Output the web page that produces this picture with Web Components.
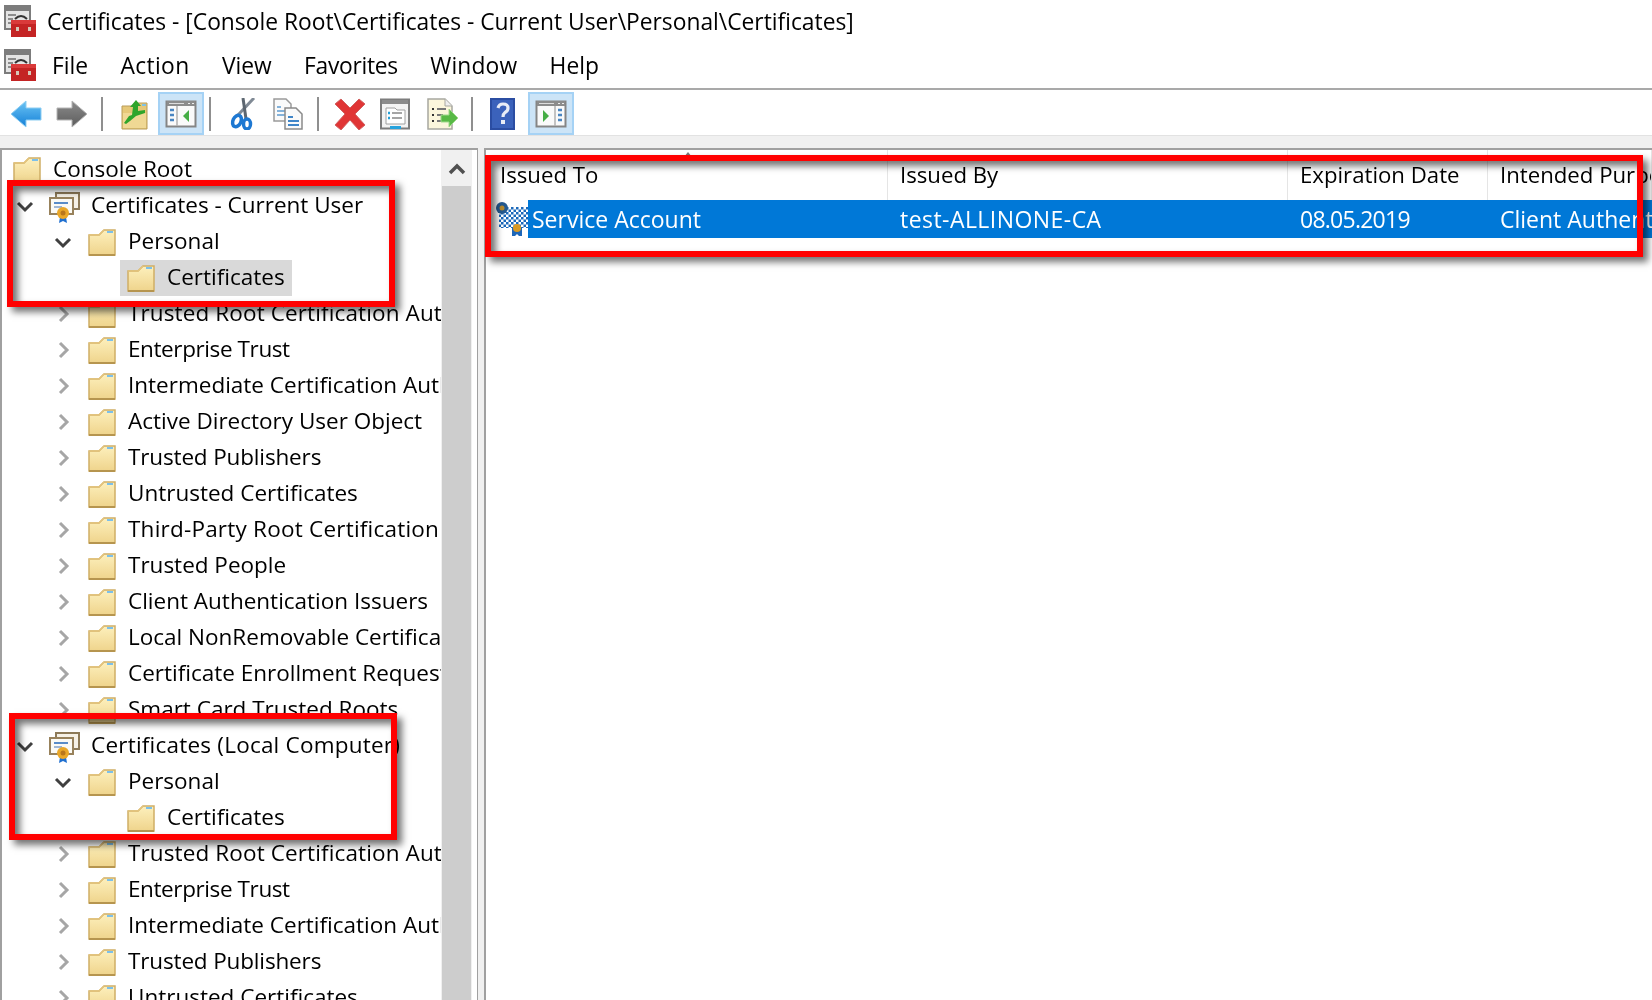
<!DOCTYPE html>
<html lang="en">
<head>
<meta charset="utf-8">
<title>Certificates</title>
<style>
  html, body { margin: 0; height: 100%; overflow: hidden; background: #fff; }
  body { font: 22.8px "Open Sans", "Noto Sans", sans-serif; color: #000; }
  tree-row { font-size: 22.5px; }
  .tight { letter-spacing: -.4px; }
  .snug { letter-spacing: -.15px; }
  .wide { letter-spacing: .12px; }
  .loose { letter-spacing: .22px; }
</style>
</head>
<body>
<mmc-window>
  <title-bar slot="title">Certificates - [Console Root\Certificates - Current User\Personal\Certificates]</title-bar>
  <menu-bar slot="menu"></menu-bar>
  <tool-bar slot="tools"></tool-bar>
  <tree-pane slot="tree">
    <tree-row icon="folder">Console Root</tree-row>
    <tree-row depth="1" exp="open" icon="cert">Certificates - Current User</tree-row>
    <tree-row depth="2" exp="open" icon="folder">Personal</tree-row>
    <tree-row depth="3" icon="folder" selected>Certificates</tree-row>
    <tree-row depth="2" exp="closed" icon="folder" class="wide">Trusted Root Certification Authorities</tree-row>
    <tree-row depth="2" exp="closed" icon="folder" class="tight">Enterprise Trust</tree-row>
    <tree-row depth="2" exp="closed" icon="folder">Intermediate Certification Authorities</tree-row>
    <tree-row depth="2" exp="closed" icon="folder">Active Directory User Object</tree-row>
    <tree-row depth="2" exp="closed" icon="folder" class="snug">Trusted Publishers</tree-row>
    <tree-row depth="2" exp="closed" icon="folder">Untrusted Certificates</tree-row>
    <tree-row depth="2" exp="closed" icon="folder" class="loose">Third-Party Root Certification Authorities</tree-row>
    <tree-row depth="2" exp="closed" icon="folder">Trusted People</tree-row>
    <tree-row depth="2" exp="closed" icon="folder">Client Authentication Issuers</tree-row>
    <tree-row depth="2" exp="closed" icon="folder">Local NonRemovable Certificates</tree-row>
    <tree-row depth="2" exp="closed" icon="folder">Certificate Enrollment Requests</tree-row>
    <tree-row depth="2" exp="closed" icon="folder">Smart Card Trusted Roots</tree-row>
    <tree-row depth="1" exp="open" icon="cert" class="loose">Certificates (Local Computer)</tree-row>
    <tree-row depth="2" exp="open" icon="folder">Personal</tree-row>
    <tree-row depth="3" icon="folder">Certificates</tree-row>
    <tree-row depth="2" exp="closed" icon="folder" class="wide">Trusted Root Certification Authorities</tree-row>
    <tree-row depth="2" exp="closed" icon="folder" class="tight">Enterprise Trust</tree-row>
    <tree-row depth="2" exp="closed" icon="folder">Intermediate Certification Authorities</tree-row>
    <tree-row depth="2" exp="closed" icon="folder" class="snug">Trusted Publishers</tree-row>
    <tree-row depth="2" exp="closed" icon="folder">Untrusted Certificates</tree-row>
  </tree-pane>
  <list-pane slot="list"></list-pane>
  <red-frame slot="marks" style="left:7px;top:180px;width:388px;height:127px"></red-frame>
  <red-frame slot="marks" style="left:9px;top:713px;width:388px;height:127px"></red-frame>
  <red-frame slot="marks" style="left:485px;top:155px;width:1158px;height:102px"></red-frame>
</mmc-window>

<script>
// all icons are drawn on a 32 unit grid unless the svg says otherwise
const consoleIcon = `
  <rect x="1" y="1" width="25" height="23" fill="#e4e4e4" stroke="#7c7c7c" stroke-width="2"/>
  <rect x="2" y="2" width="23" height="4" fill="#7c7c7c"/>
  <path d="M4 10h8M4 14h5M4 18h5" stroke="#8c8c8c" stroke-width="2"/>
  <path d="M11 14q6-6 12 0" fill="none" stroke="#333" stroke-width="2"/>
  <rect x="7" y="15" width="25" height="17" fill="#c42424"/>
  <rect x="7" y="15" width="25" height="4" fill="#da3a3a"/>
  <rect x="12" y="22" width="3" height="4" fill="#d8c8b8"/>
  <rect x="24" y="22" width="3" height="4" fill="#d8c8b8"/>`;

const paneFrame = `
  <rect x="1.500" y="3.500" width="29" height="25" fill="#fafafa" stroke="#858585" stroke-width="2"/>
  <rect x="2" y="3" width="28" height="5" fill="#8c8c8c"/>
  <path d="M4 5.500h15" stroke="#ddd"/>
  <path d="M23 5.500h2M27 5.500h2" stroke="#eee"/>`;

const ICONS = {
  console: consoleIcon,
  back: `<defs><linearGradient id="b" x1="0" y1="0" x2="0" y2="1"><stop offset="0" stop-color="#6cc4f4"/><stop offset="1" stop-color="#1480d8"/></linearGradient></defs>
    <path d="M1 16 16 3v7h15v12H16v7z" fill="url(#b)" stroke="#8ccdf2" stroke-width="1"/>`,
  forward: `<defs><linearGradient id="f" x1="0" y1="0" x2="0" y2="1"><stop offset="0" stop-color="#8c8c8c"/><stop offset="1" stop-color="#5c5c5c"/></linearGradient></defs>
    <path d="M31 16 16 3v7H1v12h15v7z" fill="url(#f)" stroke="#b4b4b4" stroke-width="1"/>`,
  upfolder: `<path d="M4 8h10l3-3h12v26H4z" fill="#e6c878" stroke="#b99c58"/>
    <path d="M5 15h23v15H5z" fill="#f0d894"/>
    <path d="M6 25 11 18l3-1 1-8-3 0 6-7 5 6-3 0 0 5 7-1 0 3-9 3-6 5-4 3z" fill="#2fa52b"/>
    <path d="M24 7h4" stroke="#7fc1e6" stroke-width="2"/>`,
  hidetree: paneFrame + `
    <path d="M12 8v20" stroke="#b0b0b0" stroke-width="1.500"/>
    <path d="M5 12h4M5 17h4M5 22h4" stroke="#4a86c2" stroke-width="2.500"/>
    <path d="M24 12v12l-6-6z" fill="#45ad45"/>`,
  showaction: paneFrame + `
    <path d="M20 8v20" stroke="#b0b0b0" stroke-width="1.500"/>
    <path d="M23 12h4M23 17h4M23 22h4" stroke="#4a86c2" stroke-width="2.500"/>
    <path d="M8 12v12l6-6z" fill="#45ad45"/>`,
  cut: `<path d="M9 17 25 0" stroke="#808a95" stroke-width="3" fill="none"/>
    <path d="M17 21 14 0" stroke="#5c6670" stroke-width="3" fill="none"/>
    <ellipse cx="8" cy="23" rx="4" ry="6" transform="rotate(25 8 23)" fill="none" stroke="#1d78d2" stroke-width="3.500"/>
    <ellipse cx="18" cy="26" rx="3.500" ry="5" fill="none" stroke="#1d78d2" stroke-width="3.500"/>`,
  copy: `<path d="M2 1h12l5 5v17H2z" fill="#fafafa" stroke="#9a9a9a" stroke-width="1.500"/>
    <path d="M5 9h4M5 13h9M5 17h9" stroke="#5d9ad0" stroke-width="1.600"/>
    <path d="M13 10h11l6 6v15H13z" fill="#fafafa" stroke="#8a8a8a" stroke-width="1.500"/>
    <path d="M16 19h5M16 23h11M16 27h11" stroke="#3f85c8" stroke-width="1.800"/>`,
  del: `<path d="M1 6 7 1l9 9 9-9 6 5-10 10 10 11-6 5-9-10-9 10-6-5 10-11z" fill="#e03535" stroke="#d06060" stroke-width="1"/>`,
  props: `<rect x="2" y="1.500" width="28" height="29" fill="#f4f4f4" stroke="#7d7d7d" stroke-width="2"/>
    <rect x="3" y="2" width="26" height="4" fill="#8c8c8c"/>
    <path d="M7 10h9l2 2h8v14H7z" fill="#fff" stroke="#a0a0a0"/>
    <path d="M9 15h2M9 20h2" stroke="#25a0d8" stroke-width="2.500"/>
    <path d="M13 15h10M13 20h10" stroke="#888" stroke-width="1.600"/>
    <rect x="11" y="28" width="11" height="3" fill="#27a3dd"/>`,
  exportlist: `<path d="M2 1h17l7 7v23H2z" fill="#fbf6dc" stroke="#a8a8a0" stroke-width="1.500"/>
    <path d="M19 1v7h7" fill="#eee" stroke="#a8a8a0"/>
    <path d="M6 11h2M6 17h2M6 23h2" stroke="#333" stroke-width="2"/>
    <path d="M11 11h9M11 17h6M11 23h5" stroke="#777" stroke-width="2"/>
    <path d="M15 17h8v-6l9 9-9 9v-5h-8z" fill="#58b946" stroke="#9fd98c"/>`,
  help: `<rect x="3" y="0" width="25" height="32" fill="#2b4da2"/>
    <rect x="5" y="2" width="21" height="28" fill="#3b62bb"/>
    <path d="M11 10q1-4 5-4 5 0 5 4 0 3-3 4.500-2 1.500-2 4.500" fill="none" stroke="#e8ecf6" stroke-width="3.200"/>
    <rect x="14" y="22" width="4" height="4" fill="#e8ecf6"/>`
};

class MmcIcon extends HTMLElement {
  constructor() {
    super();
    const size = this.getAttribute('size') || 32;
    this.attachShadow({mode: 'open'}).innerHTML = `
      <style>:host { display: block; width: ${size}px; height: ${size}px; flex: none; } svg { display: block; }</style>
      <svg width="${size}" height="${size}" viewBox="0 0 32 32">${ICONS[this.getAttribute('name')] || ''}</svg>`;
  }
}
customElements.define('mmc-icon', MmcIcon);

class MmcWindow extends HTMLElement {
  constructor() {
    super();
    this.attachShadow({mode: 'open'}).innerHTML = `
      <style>
        :host { display: flex; flex-direction: column; width: 1652px; height: 1000px; position: relative; overflow: hidden; filter: blur(.35px); }
        .band { height: 12px; flex: none; background: #f0f0f0; border-top: 1px solid #e2e2e2; }
        .main { flex: 1; min-height: 0; display: flex; background: #f0f0f0; }
      </style>
      <slot name="title"></slot>
      <slot name="menu"></slot>
      <slot name="tools"></slot>
      <div class="band"></div>
      <div class="main"><slot name="tree"></slot><slot name="list"></slot></div>
      <slot name="marks"></slot>`;
  }
}
customElements.define('mmc-window', MmcWindow);

class TitleBar extends HTMLElement {
  constructor() {
    super();
    this.attachShadow({mode: 'open'}).innerHTML = `
      <style>
        :host { display: flex; align-items: center; height: 44px; flex: none; padding-left: 4px; box-sizing: border-box; white-space: nowrap; padding-bottom: 3px; }
        mmc-icon { margin-top: 0; }
        span { margin: 2px 0 0 11px; }
      </style>
      <mmc-icon name="console"></mmc-icon><span><slot></slot></span>`;
  }
}
customElements.define('title-bar', TitleBar);

class MenuBar extends HTMLElement {
  constructor() {
    super();
    this.attachShadow({mode: 'open'}).innerHTML = `
      <style>
        :host { display: flex; align-items: center; height: 46px; flex: none; box-sizing: border-box; padding: 0 0 2px 4px; border-bottom: 2px solid #a9a9a9; }
        nav { display: flex; gap: 32.4px; margin-left: 16px; }
      </style>
      <mmc-icon name="console"></mmc-icon>
      <nav>
        <span>File</span>
        <span style="letter-spacing:.35px">Action</span>
        <span>View</span>
        <span style="letter-spacing:-.3px">Favorites</span>
        <span style="letter-spacing:.15px">Window</span>
        <span>Help</span>
      </nav>`;
  }
}
customElements.define('menu-bar', MenuBar);

class ToolBar extends HTMLElement {
  constructor() {
    super();
    // [icon, button left, active]
    const tools = [
      ['back', 10], ['forward', 56], 'sep:101', ['upfolder', 118], ['hidetree', 158, true], 'sep:209',
      ['cut', 229], ['copy', 272], 'sep:317', ['del', 334], ['props', 379], ['exportlist', 426],
      'sep:471', ['help', 487], ['showaction', 528, true]
    ];
    let x = 0, html = '';
    for (const t of tools) {
      if (typeof t === 'string') {
        const at = +t.slice(4);
        html += `<i class="sep" style="margin-left:${at - x}px"></i>`;
        x = at + 2;
      } else {
        const w = t[2] ? 46 : 32;
        html += `<b class="${t[2] ? 'on' : ''}" style="margin-left:${t[1] - x}px;width:${w}px"><mmc-icon name="${t[0]}"></mmc-icon></b>`;
        x = t[1] + w;
      }
    }
    this.attachShadow({mode: 'open'}).innerHTML = `
      <style>
        :host { display: flex; align-items: stretch; height: 45px; flex: none; box-sizing: border-box; padding-top: 2px; }
        b { display: flex; align-items: center; justify-content: center; box-sizing: border-box; height: 43px; flex: none; padding-top: 1px; }
        b.on { background: #cce4f7; border: 2px solid #a5d2f5; padding-top: 0; }
        .sep { width: 2px; height: 34px; margin-top: 5px; background: #8f8f8f; flex: none; }
      </style>${html}`;
  }
}
customElements.define('tool-bar', ToolBar);

class TreePane extends HTMLElement {
  constructor() {
    super();
    this.attachShadow({mode: 'open'}).innerHTML = `
      <style>
        :host { display: flex; flex: none; width: 478px; box-sizing: border-box; background: #fff; border: solid #a0a0a0; border-width: 2px 1px 0 2px; overflow: hidden; }
        .rows { width: 439px; flex: none; overflow: hidden; padding-top: 2px; }
        .bar { width: 31px; flex: none; background: #f0f0f0; display: flex; flex-direction: column; }
        .up { height: 34px; margin-top: 2px; display: flex; align-items: center; justify-content: center; flex: none; }
        .thumb { flex: 1; background: #cdcdcd; margin: 0 1px; }
      </style>
      <div class="rows"><slot></slot></div>
      <div class="bar">
        <div class="up"><svg width="18" height="12" viewBox="0 0 18 12"><path d="M2 10 9 3l7 7" fill="none" stroke="#505050" stroke-width="3.500"/></svg></div>
        <div class="thumb"></div>
      </div>`;
  }
}
customElements.define('tree-pane', TreePane);

class TreeRow extends HTMLElement {
  constructor() {
    super();
    const depth = +this.getAttribute('depth') || 0;
    const exp = this.getAttribute('exp');
    const icon = this.getAttribute('icon');
    let expander = '';
    if (exp === 'open') expander = '<path d="M2 6 9 13l7-7" fill="none" stroke="#404040" stroke-width="3"/>';
    if (exp === 'closed') expander = '<path d="M6 2l7 7-7 7" fill="none" stroke="#a6a6a6" stroke-width="3"/>';
    const img = icon === 'cert'
      ? `<svg width="32" height="32" viewBox="0 0 32 32" style="margin-top:1px">
           <rect x="8" y="2" width="23" height="16" fill="#f6f1e6" stroke="#8d7a58" stroke-width="2"/>
           <rect x="2" y="7" width="23" height="16" fill="#fbfaf5" stroke="#98825c" stroke-width="2"/>
           <path d="M6 12h14" stroke="#5a8cc8" stroke-width="2"/><path d="M6 16h8" stroke="#9fb6d4" stroke-width="2"/>
           <path d="M12 26l-1 6 4-2 4 2-1-6z" fill="#1f6fd0"/>
           <circle cx="15" cy="22" r="6" fill="#eaa727"/><circle cx="15" cy="22" r="2.500" fill="#b9761a"/>
         </svg>`
      : `<svg width="28" height="27" viewBox="0 0 28 27">
           <defs><linearGradient id="g" x1="0" y1="0" x2="0" y2="1"><stop offset="0" stop-color="#fdf0bd"/><stop offset="1" stop-color="#efd48c"/></linearGradient></defs>
           <path d="M1 6h10l5-5h11v25H1z" fill="url(#g)" stroke="#cfae66" stroke-width="1.500"/>
           <path d="M1 6h10l5-5" fill="none" stroke="#e4c47c" stroke-width="1.500"/>
           <path d="M19 3h6" stroke="#7cc0ea" stroke-width="2"/>
           <path d="M1 26h26" stroke="#b6954f" stroke-width="2"/>
         </svg>`;
    const left = [11, 14, 52, 118][depth];
    const gap = [12, 11, 12, 12][depth];
    const expW = depth === 0 || depth === 3 ? 0 : depth === 2 ? 34 : 32;
    this.attachShadow({mode: 'open'}).innerHTML = `
      <style>
        :host { display: flex; height: 36px; align-items: center; white-space: nowrap; padding-left: ${left}px; box-sizing: border-box; }
        .exp { width: ${expW}px; flex: none; display: flex; align-items: center; }
        .box { display: flex; align-items: center; height: 36px; padding: 0 7px 0 ${depth === 3 ? 7 : 0}px; }
        .txt { margin: -3px 0 0 ${gap}px; }
        :host([selected]) .box { background: #d9d9d9; }
      </style>
      ${expW ? `<span class="exp"><svg width="18" height="18" viewBox="0 0 18 18">${expander}</svg></span>` : ''}
      <div class="box">${img}<span class="txt"><slot></slot></span></div>`;
  }
}
customElements.define('tree-row', TreeRow);

class ListPane extends HTMLElement {
  constructor() {
    super();
    const heads = ['Issued To', 'Issued By', 'Expiration Date', 'Intended Purposes'];
    this.attachShadow({mode: 'open'}).innerHTML = `
      <style>
        :host { display: block; flex: 1; min-width: 0; margin-left: 6px; background: #fff; border: solid #a0a0a0; border-width: 2px 0 0 2px; overflow: hidden; white-space: nowrap; }
        .head { display: grid; grid-template-columns: 402px 400px 200px 1fr; height: 50px; font-size: 22.2px; }
        .head div { position: relative; padding: 6px 0 0 12px; line-height: 38px; border-right: 1px solid #e5e5e5; overflow: hidden; }
        .head div:first-child { padding-left: 14px; }
        .caret { position: absolute; top: 2px; left: 198px; width: 0; height: 0; border: 4px solid transparent; border-top: 0; border-bottom: 5px solid #777; }
        .row { display: flex; height: 38px; }
        .mark { flex: none; width: 32px; height: 34px; margin: 2px 0 0 10px; }
        .sel { flex: 1; display: grid; grid-template-columns: 359px 401px 199px 1fr; background: #0078d7; color: #fff; line-height: 38px; font-size: 23px; }
        .sel span { padding-left: 13px; overflow: hidden; }
        .sel span:first-child { padding-left: 4px; }
      </style>
      <div class="head">${heads.map((h, i) => `<div>${h}${i === 0 ? '<i class="caret"></i>' : ''}</div>`).join('')}</div>
      <div class="row">
        <svg class="mark" viewBox="0 0 32 34">
          <defs><pattern id="dither" width="5" height="5" patternUnits="userSpaceOnUse">
            <rect width="5" height="5" fill="#fff"/><rect width="2.500" height="2.500" fill="#1a68ba"/><rect x="2.500" y="2.500" width="2.500" height="2.500" fill="#1a68ba"/>
          </pattern></defs>
          <rect x="3" y="5" width="29" height="21" fill="url(#dither)"/>
          <circle cx="6" cy="6" r="6" fill="#24598f"/>
          <circle cx="6" cy="6" r="2.500" fill="#b78a2c"/>
          <path d="M16 26h10v8h-3l-2-2-2 2h-3z" fill="#1d66b8"/>
          <circle cx="21" cy="26" r="4" fill="#d99a24"/>
        </svg>
        <div class="sel">
          <span>Service Account</span>
          <span style="letter-spacing:.45px">test-ALLINONE-CA</span>
          <span style="letter-spacing:-.75px;margin-left:-1px">08.05.2019</span>
          <span>Client Authentication</span>
        </div>
      </div>`;
  }
}
customElements.define('list-pane', ListPane);

class RedFrame extends HTMLElement {
  constructor() {
    super();
    this.attachShadow({mode: 'open'}).innerHTML = `
      <style>
        :host { display: block; position: absolute; box-sizing: border-box; border: 6px solid #f00; pointer-events: none;
                box-shadow: 5px 5px 7px rgba(0,0,0,.55), inset 5px 5px 7px rgba(0,0,0,.55); }
      </style>`;
  }
}
customElements.define('red-frame', RedFrame);
</script>
</body>
</html>
